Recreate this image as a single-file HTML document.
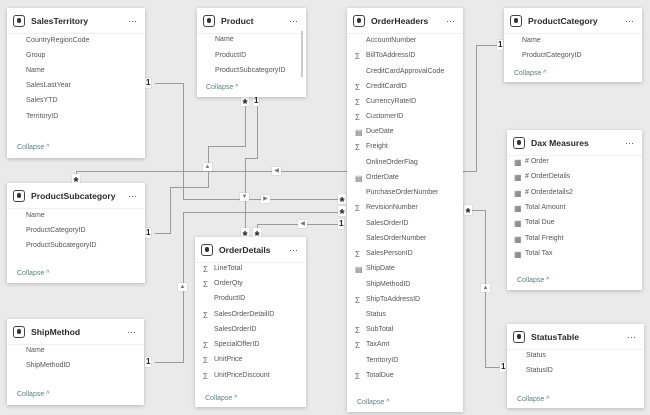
<!DOCTYPE html><html><head><style>
*{margin:0;padding:0;box-sizing:border-box}
body{width:650px;height:415px;background:#eaeaea;position:relative;overflow:hidden;font-family:"Liberation Sans",sans-serif}
.b{position:absolute;background:#fff;box-shadow:0 1px 4px rgba(0,0,0,.22)}
.h{position:absolute;left:6px;top:7px;font-size:8.6px;font-weight:bold;color:#2a2a2a;display:flex;align-items:center}
.i{width:12px;height:12px;border:1.3px solid #444;border-radius:3px;margin-right:6px;position:relative}
.i:after{content:"";position:absolute;left:2.5px;top:2px;width:4.5px;height:5px;background:#333;border-radius:2px}
.d{position:absolute;right:8px;top:8px;font-size:9px;color:#444}
.s{position:absolute;left:0;right:0;top:25px;border-top:1px solid #f0f0f0}
.f{position:absolute;font-size:7px;color:#555;white-space:nowrap}
.g{position:absolute;font-size:8px;color:#666}
.c{position:absolute;font-size:7px;color:#5a8080}
.l{position:absolute;background:#9a9a9a}
.k{position:absolute;background:#fff;font-size:8px;color:#222;font-weight:bold;line-height:10px;height:10px;padding:0 1px;box-shadow:0 0 1px #aaa}
.k.st{font-size:13px;line-height:15px;height:10px;overflow:hidden;width:8px;text-align:center;padding:0}
.a{position:absolute;width:9px;height:8px;background:#fff;font-size:6px;color:#777;text-align:center;line-height:8px;box-shadow:0 0 1px #aaa}
</style></head><body>
<div class="l" style="left:155px;top:83px;width:28px;height:1px"></div>
<div class="l" style="left:183px;top:83px;width:1px;height:116px"></div>
<div class="l" style="left:183px;top:199px;width:159px;height:1px"></div>
<div class="l" style="left:245px;top:105px;width:1px;height:41px"></div>
<div class="l" style="left:208px;top:146px;width:38px;height:1px"></div>
<div class="l" style="left:208px;top:146px;width:1px;height:41px"></div>
<div class="l" style="left:170px;top:187px;width:39px;height:1px"></div>
<div class="l" style="left:170px;top:187px;width:1px;height:46px"></div>
<div class="l" style="left:155px;top:233px;width:16px;height:1px"></div>
<div class="l" style="left:257px;top:105px;width:1px;height:53px"></div>
<div class="l" style="left:245px;top:158px;width:13px;height:1px"></div>
<div class="l" style="left:245px;top:158px;width:1px;height:72px"></div>
<div class="l" style="left:76px;top:171px;width:400px;height:1px"></div>
<div class="l" style="left:76px;top:171px;width:1px;height:4px"></div>
<div class="l" style="left:476px;top:45px;width:1px;height:127px"></div>
<div class="l" style="left:476px;top:45px;width:22px;height:1px"></div>
<div class="l" style="left:183px;top:212px;width:159px;height:1px"></div>
<div class="l" style="left:183px;top:212px;width:1px;height:150px"></div>
<div class="l" style="left:155px;top:362px;width:29px;height:1px"></div>
<div class="l" style="left:257px;top:224px;width:85px;height:1px"></div>
<div class="l" style="left:257px;top:224px;width:1px;height:6px"></div>
<div class="l" style="left:468px;top:210px;width:17px;height:1px"></div>
<div class="l" style="left:485px;top:210px;width:1px;height:157px"></div>
<div class="l" style="left:485px;top:367px;width:18px;height:1px"></div>
<div class="a" style="left:203px;top:163px">▲</div>
<div class="a" style="left:272px;top:167px">◀</div>
<div class="a" style="left:240px;top:193px">▼</div>
<div class="a" style="left:261px;top:195px">▶</div>
<div class="a" style="left:298px;top:220px">◀</div>
<div class="a" style="left:178px;top:283px">▲</div>
<div class="a" style="left:481px;top:284px">▲</div>
<div class="k" style="left:145px;top:78px">1</div>
<div class="k st" style="left:241px;top:96px">*</div>
<div class="k" style="left:253px;top:96px">1</div>
<div class="k st" style="left:72px;top:174px">*</div>
<div class="k" style="left:145px;top:228px">1</div>
<div class="k" style="left:145px;top:357px">1</div>
<div class="k st" style="left:241px;top:228px">*</div>
<div class="k st" style="left:253px;top:228px">*</div>
<div class="k st" style="left:338px;top:194px">*</div>
<div class="k st" style="left:338px;top:206px">*</div>
<div class="k" style="left:338px;top:219px">1</div>
<div class="k st" style="left:464px;top:205px">*</div>
<div class="k" style="left:497px;top:40px">1</div>
<div class="k" style="left:500px;top:362px">1</div>

<div class="b" style="left:7px;top:8px;width:138px;height:150px">
<div class="h"><span class="i"></span>SalesTerritory</div><div class="d">···</div><div class="s"></div>
<div class="f" style="left:19px;top:29px">CountryRegionCode</div>
<div class="f" style="left:19px;top:44px">Group</div>
<div class="f" style="left:19px;top:59px">Name</div>
<div class="f" style="left:19px;top:74px">SalesLastYear</div>
<div class="f" style="left:19px;top:89px">SalesYTD</div>
<div class="f" style="left:19px;top:105px">TerritoryID</div>
<div class="c" style="left:10px;top:136px">Collapse ^</div></div>
<div class="b" style="left:197px;top:8px;width:109px;height:89px">
<div class="h"><span class="i"></span>Product</div><div class="d">···</div><div class="s"></div>
<div style="position:absolute;left:104px;top:23px;width:2px;height:46px;background:#ccc"></div>
<div class="f" style="left:18px;top:28px">Name</div>
<div class="f" style="left:18px;top:44px">ProductID</div>
<div class="f" style="left:18px;top:59px">ProductSubcategoryID</div>
<div class="c" style="left:9px;top:76px">Collapse ^</div></div>
<div class="b" style="left:347px;top:8px;width:116px;height:404px">
<div class="h"><span class="i"></span>OrderHeaders</div><div class="d">···</div><div class="s"></div>
<div class="f" style="left:19px;top:29px">AccountNumber</div>
<div class="g" style="left:8px;top:44px">Σ</div><div class="f" style="left:19px;top:44px">BillToAddressID</div>
<div class="f" style="left:19px;top:60px">CreditCardApprovalCode</div>
<div class="g" style="left:8px;top:75px">Σ</div><div class="f" style="left:19px;top:75px">CreditCardID</div>
<div class="g" style="left:8px;top:90px">Σ</div><div class="f" style="left:19px;top:90px">CurrencyRateID</div>
<div class="g" style="left:8px;top:105px">Σ</div><div class="f" style="left:19px;top:105px">CustomerID</div>
<div class="g" style="left:8px;top:120px">▤</div><div class="f" style="left:19px;top:120px">DueDate</div>
<div class="g" style="left:8px;top:135px">Σ</div><div class="f" style="left:19px;top:135px">Freight</div>
<div class="f" style="left:19px;top:151px">OnlineOrderFlag</div>
<div class="g" style="left:8px;top:166px">▤</div><div class="f" style="left:19px;top:166px">OrderDate</div>
<div class="f" style="left:19px;top:181px">PurchaseOrderNumber</div>
<div class="g" style="left:8px;top:196px">Σ</div><div class="f" style="left:19px;top:196px">RevisionNumber</div>
<div class="f" style="left:19px;top:212px">SalesOrderID</div>
<div class="f" style="left:19px;top:227px">SalesOrderNumber</div>
<div class="g" style="left:8px;top:242px">Σ</div><div class="f" style="left:19px;top:242px">SalesPersonID</div>
<div class="g" style="left:8px;top:257px">▤</div><div class="f" style="left:19px;top:257px">ShipDate</div>
<div class="f" style="left:19px;top:273px">ShipMethodID</div>
<div class="g" style="left:8px;top:288px">Σ</div><div class="f" style="left:19px;top:288px">ShipToAddressID</div>
<div class="f" style="left:19px;top:303px">Status</div>
<div class="g" style="left:8px;top:318px">Σ</div><div class="f" style="left:19px;top:318px">SubTotal</div>
<div class="g" style="left:8px;top:333px">Σ</div><div class="f" style="left:19px;top:333px">TaxAmt</div>
<div class="f" style="left:19px;top:349px">TerritoryID</div>
<div class="g" style="left:8px;top:364px">Σ</div><div class="f" style="left:19px;top:364px">TotalDue</div>
<div class="c" style="left:10px;top:391px">Collapse ^</div></div>
<div class="b" style="left:504px;top:8px;width:138px;height:74px">
<div class="h"><span class="i"></span>ProductCategory</div><div class="d">···</div><div class="s"></div>
<div class="f" style="left:18px;top:29px">Name</div>
<div class="f" style="left:18px;top:44px">ProductCategoryID</div>
<div class="c" style="left:10px;top:62px">Collapse ^</div></div>
<div class="b" style="left:507px;top:130px;width:135px;height:160px">
<div class="h"><span class="i"></span>Dax Measures</div><div class="d">···</div><div class="s"></div>
<div class="g" style="left:7px;top:28px">▦</div><div class="f" style="left:18px;top:28px"># Order</div>
<div class="g" style="left:7px;top:43px">▦</div><div class="f" style="left:18px;top:43px"># OrderDetails</div>
<div class="g" style="left:7px;top:59px">▦</div><div class="f" style="left:18px;top:59px"># Orderdetails2</div>
<div class="g" style="left:7px;top:74px">▦</div><div class="f" style="left:18px;top:74px">Total Amount</div>
<div class="g" style="left:7px;top:89px">▦</div><div class="f" style="left:18px;top:89px">Total Due</div>
<div class="g" style="left:7px;top:105px">▦</div><div class="f" style="left:18px;top:105px">Total Freight</div>
<div class="g" style="left:7px;top:120px">▦</div><div class="f" style="left:18px;top:120px">Total Tax</div>
<div class="c" style="left:10px;top:147px">Collapse ^</div></div>
<div class="b" style="left:7px;top:183px;width:138px;height:100px">
<div class="h"><span class="i"></span>ProductSubcategory</div><div class="d">···</div><div class="s"></div>
<div class="f" style="left:19px;top:29px">Name</div>
<div class="f" style="left:19px;top:44px">ProductCategoryID</div>
<div class="f" style="left:19px;top:59px">ProductSubcategoryID</div>
<div class="c" style="left:10px;top:87px">Collapse ^</div></div>
<div class="b" style="left:7px;top:319px;width:137px;height:86px">
<div class="h"><span class="i"></span>ShipMethod</div><div class="d">···</div><div class="s"></div>
<div class="f" style="left:19px;top:28px">Name</div>
<div class="f" style="left:19px;top:43px">ShipMethodID</div>
<div class="c" style="left:10px;top:72px">Collapse ^</div></div>
<div class="b" style="left:195px;top:237px;width:111px;height:170px">
<div class="h"><span class="i"></span>OrderDetails</div><div class="d">···</div><div class="s"></div>
<div class="g" style="left:8px;top:28px">Σ</div><div class="f" style="left:19px;top:28px">LineTotal</div>
<div class="g" style="left:8px;top:43px">Σ</div><div class="f" style="left:19px;top:43px">OrderQty</div>
<div class="f" style="left:19px;top:58px">ProductID</div>
<div class="g" style="left:8px;top:74px">Σ</div><div class="f" style="left:19px;top:74px">SalesOrderDetailID</div>
<div class="f" style="left:19px;top:89px">SalesOrderID</div>
<div class="g" style="left:8px;top:104px">Σ</div><div class="f" style="left:19px;top:104px">SpecialOfferID</div>
<div class="g" style="left:8px;top:119px">Σ</div><div class="f" style="left:19px;top:119px">UnitPrice</div>
<div class="g" style="left:8px;top:135px">Σ</div><div class="f" style="left:19px;top:135px">UnitPriceDiscount</div>
<div class="c" style="left:10px;top:158px">Collapse ^</div></div>
<div class="b" style="left:507px;top:324px;width:137px;height:84px">
<div class="h"><span class="i"></span>StatusTable</div><div class="d">···</div><div class="s"></div>
<div class="f" style="left:19px;top:28px">Status</div>
<div class="f" style="left:19px;top:43px">StatusID</div>
<div class="c" style="left:10px;top:72px">Collapse ^</div></div>
</body></html>
